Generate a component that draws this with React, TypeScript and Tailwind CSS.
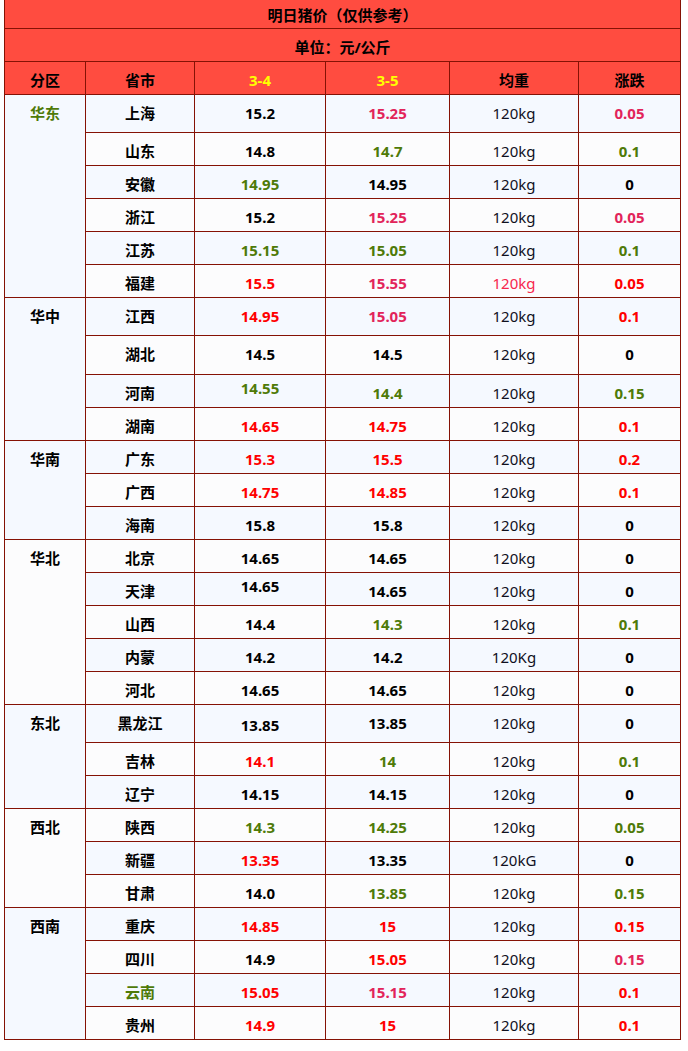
import React from "react";

type Clr = "k" | "r" | "c" | "g" | "p" | "n";

const COLOR: Record<Clr, string> = {
  k: "text-black",
  r: "text-[#ff0000]",
  c: "text-[#e2245a]",
  g: "text-[#4e7a08]",
  p: "text-[#f7264e]",
  n: "text-[#10101e]",
};

type Row = {
  p: string;
  pc?: Clr;
  a: string;
  ac: Clr;
  b: string;
  bc: Clr;
  w?: string;
  wc?: Clr;
  d: string;
  dc: Clr;
  h?: "h-[32px]" | "h-[37px]" | "h-[38px]";
  ap?: string;
};

type Region = { name: string; nc?: Clr; rows: Row[] };

const DATA: Region[] = [
  {
    name: "华东",
    nc: "g",
    rows: [
      { p: "上海", a: "15.2", ac: "k", b: "15.25", bc: "c", d: "0.05", dc: "c", h: "h-[37px]" },
      { p: "山东", a: "14.8", ac: "k", b: "14.7", bc: "g", d: "0.1", dc: "g" },
      { p: "安徽", a: "14.95", ac: "g", b: "14.95", bc: "k", d: "0", dc: "k" },
      { p: "浙江", a: "15.2", ac: "k", b: "15.25", bc: "c", d: "0.05", dc: "c" },
      { p: "江苏", a: "15.15", ac: "g", b: "15.05", bc: "g", d: "0.1", dc: "g" },
      { p: "福建", a: "15.5", ac: "r", b: "15.55", bc: "c", wc: "p", d: "0.05", dc: "r" },
    ],
  },
  {
    name: "华中",
    rows: [
      { p: "江西", a: "14.95", ac: "r", b: "15.05", bc: "c", d: "0.1", dc: "r", h: "h-[37px]" },
      { p: "湖北", a: "14.5", ac: "k", b: "14.5", bc: "k", d: "0", dc: "k", h: "h-[38px]" },
      { p: "河南", a: "14.55", ac: "g", b: "14.4", bc: "g", d: "0.15", dc: "g", ap: "pt-[3px]" },
      { p: "湖南", a: "14.65", ac: "r", b: "14.75", bc: "r", d: "0.1", dc: "r" },
    ],
  },
  {
    name: "华南",
    rows: [
      { p: "广东", a: "15.3", ac: "r", b: "15.5", bc: "r", d: "0.2", dc: "r" },
      { p: "广西", a: "14.75", ac: "r", b: "14.85", bc: "r", d: "0.1", dc: "r" },
      { p: "海南", a: "15.8", ac: "k", b: "15.8", bc: "k", d: "0", dc: "k" },
    ],
  },
  {
    name: "华北",
    rows: [
      { p: "北京", a: "14.65", ac: "k", b: "14.65", bc: "k", d: "0", dc: "k" },
      { p: "天津", a: "14.65", ac: "k", b: "14.65", bc: "k", d: "0", dc: "k", ap: "pt-[3px]" },
      { p: "山西", a: "14.4", ac: "k", b: "14.3", bc: "g", d: "0.1", dc: "g" },
      { p: "内蒙", a: "14.2", ac: "k", b: "14.2", bc: "k", w: "120Kg", d: "0", dc: "k" },
      { p: "河北", a: "14.65", ac: "k", b: "14.65", bc: "k", d: "0", dc: "k" },
    ],
  },
  {
    name: "东北",
    rows: [
      { p: "黑龙江", a: "13.85", ac: "k", b: "13.85", bc: "k", d: "0", dc: "k", h: "h-[37px]", ap: "pt-[10px]" },
      { p: "吉林", a: "14.1", ac: "r", b: "14", bc: "g", d: "0.1", dc: "g" },
      { p: "辽宁", a: "14.15", ac: "k", b: "14.15", bc: "k", d: "0", dc: "k" },
    ],
  },
  {
    name: "西北",
    rows: [
      { p: "陕西", a: "14.3", ac: "g", b: "14.25", bc: "g", d: "0.05", dc: "g" },
      { p: "新疆", a: "13.35", ac: "r", b: "13.35", bc: "k", w: "120kG", d: "0", dc: "k" },
      { p: "甘肃", a: "14.0", ac: "k", b: "13.85", bc: "g", d: "0.15", dc: "g" },
    ],
  },
  {
    name: "西南",
    rows: [
      { p: "重庆", a: "14.85", ac: "r", b: "15", bc: "r", d: "0.15", dc: "r" },
      { p: "四川", a: "14.9", ac: "k", b: "15.05", bc: "r", d: "0.15", dc: "c" },
      { p: "云南", pc: "g", a: "15.05", ac: "r", b: "15.15", bc: "c", d: "0.1", dc: "r" },
      { p: "贵州", a: "14.9", ac: "r", b: "15", bc: "r", d: "0.1", dc: "r" },
    ],
  },
];

const SPAN: Record<number, string> = {
  3: "row-span-3",
  4: "row-span-4",
  5: "row-span-5",
  6: "row-span-6",
};

const BLUE = "bg-[#f5f9ff]";
const WHITE = "bg-[#fcfcfd]";

export default function App() {
  let idx = 0;
  const cells: React.ReactNode[] = [];
  DATA.forEach((reg, ri) => {
    const firstBg = idx % 2 === 0 ? BLUE : WHITE;
    cells.push(
      <div
        key={`reg-${ri}`}
        className={`${SPAN[reg.rows.length]} col-start-1 ${firstBg} pt-2 leading-5 text-center font-bold ${COLOR[reg.nc ?? "k"]}`}
      >
        {reg.name}
      </div>
    );
    reg.rows.forEach((r, k) => {
      const bg = idx % 2 === 0 ? BLUE : WHITE;
      const h = r.h ?? "h-[32px]";
      const base = `${bg} ${h} leading-5 text-center`;
      cells.push(
        <div key={`p-${ri}-${k}`} className={`col-start-2 ${base} pt-2 font-bold ${COLOR[r.pc ?? "k"]}`}>
          {r.p}
        </div>,
        <div key={`a-${ri}-${k}`} className={`${base} ${r.ap ?? "pt-2"} font-bold ${COLOR[r.ac]}`}>
          {r.a}
        </div>,
        <div key={`b-${ri}-${k}`} className={`${base} pt-2 font-bold ${COLOR[r.bc]}`}>
          {r.b}
        </div>,
        <div key={`w-${ri}-${k}`} className={`${base} pt-2 font-normal ${COLOR[r.wc ?? "n"]}`}>
          {r.w ?? "120kg"}
        </div>,
        <div key={`d-${ri}-${k}`} className={`${base} pt-2 font-bold ${COLOR[r.dc]}`}>
          {r.d}
        </div>
      );
      idx++;
    });
  });

  return (
    <div className="min-h-[1051px] w-[688px] bg-white pl-[4px] font-['Noto_Sans','Noto_Sans_CJK_SC',sans-serif] text-[15px]">
      <div className="grid w-[677px] grid-cols-[80px_108px_130px_123px_128px_101px] gap-px bg-[#851205] px-px pb-px">
        <div className="col-span-6 h-[28px] bg-[#ff4c40] pt-[5px] text-center font-bold leading-5 text-black">
          明日猪价（仅供参考）
        </div>
        <div className="col-span-6 h-[32px] bg-[#ff4c40] pt-2 text-center font-bold leading-5 text-black">
          单位：元/公斤
        </div>
        <div className="h-[32px] bg-[#ff4c40] pt-2 text-center font-bold leading-5 text-black">分区</div>
        <div className="h-[32px] bg-[#ff4c40] pt-2 text-center font-bold leading-5 text-black">省市</div>
        <div className="h-[32px] bg-[#ff4c40] pt-2 text-center font-bold leading-5 text-[#ffff00]">3-4</div>
        <div className="h-[32px] bg-[#ff4c40] pt-2 text-center font-bold leading-5 text-[#ffff00]">3-5</div>
        <div className="h-[32px] bg-[#ff4c40] pt-2 text-center font-bold leading-5 text-black">均重</div>
        <div className="h-[32px] bg-[#ff4c40] pt-2 text-center font-bold leading-5 text-black">涨跌</div>
        {cells}
      </div>
    </div>
  );
}
